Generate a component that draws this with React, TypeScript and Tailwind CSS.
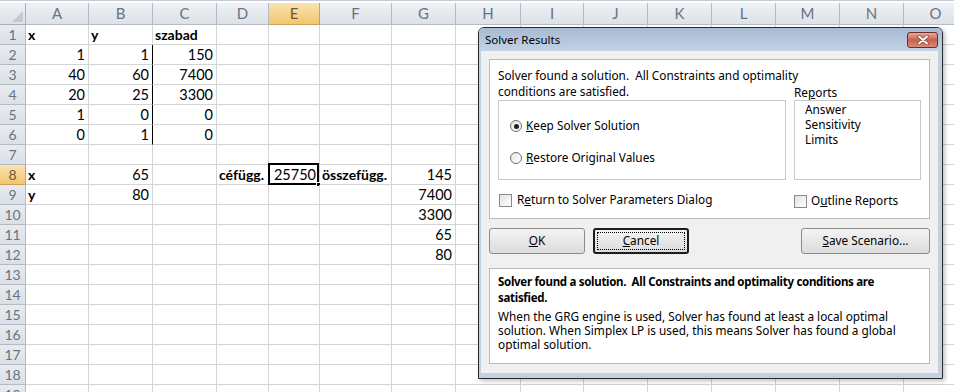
import React from 'react';

const cols = ['A', 'B', 'C', 'D', 'E', 'F', 'G', 'H', 'I', 'J', 'K', 'L', 'M', 'N', 'O'];
const colW = [
  'w-[63px]', 'w-[64px]', 'w-[64px]', 'w-[52px]', 'w-[51px]', 'w-[72px]', 'w-[64px]',
  'w-[65px]', 'w-[63px]', 'w-[64px]', 'w-[64px]', 'w-[64px]', 'w-[64px]', 'w-[64px]', 'w-[64px]',
];

type Cell = { v: string; b?: boolean };

const data: Record<string, Cell> = {
  A1: { v: 'x', b: true }, B1: { v: 'y', b: true }, C1: { v: 'szabad', b: true },
  A2: { v: '1' }, B2: { v: '1' }, C2: { v: '150' },
  A3: { v: '40' }, B3: { v: '60' }, C3: { v: '7400' },
  A4: { v: '20' }, B4: { v: '25' }, C4: { v: '3300' },
  A5: { v: '1' }, B5: { v: '0' }, C5: { v: '0' },
  A6: { v: '0' }, B6: { v: '1' }, C6: { v: '0' },
  A8: { v: 'x', b: true }, B8: { v: '65' }, D8: { v: 'céfügg.', b: true },
  E8: { v: '25750' }, F8: { v: 'összefügg.', b: true }, G8: { v: '145' },
  A9: { v: 'y', b: true }, B9: { v: '80' }, G9: { v: '7400' },
  G10: { v: '3300' }, G11: { v: '65' }, G12: { v: '80' },
};

const rows = Array.from({ length: 19 }, (_, i) => i + 1);

function Sheet() {
  return (
    <div className="flex flex-col font-['Lato',sans-serif] text-[14.5px] text-black">
      <div className="h-[3px] border-t border-[#c4cad2] bg-white" />
      {/* column headers */}
      <div className="flex h-[22px]">
        <div className="relative w-[26px] shrink-0 border-r border-b border-[#a7afb9] bg-gradient-to-b from-[#eef1f5] to-[#dde2e8]">
          <svg className="absolute right-[2px] bottom-[2px]" width="11" height="11" viewBox="0 0 11 11">
            <polygon points="11,0 11,11 0,11" fill="#c3c9d1" />
          </svg>
        </div>
        {cols.map((c, i) => (
          <div
            key={c}
            className={`${colW[i]} shrink-0 flex items-center justify-center border-r border-b text-[15px] ${
              c === 'E'
                ? 'bg-gradient-to-b from-[#fbe3b0] to-[#f3c56c] border-[#c9a35a] text-[#6b5a3a]'
                : 'bg-gradient-to-b from-[#eef1f5] to-[#dde2e8] border-[#b4bbc4] text-[#68737f]'
            }`}
          >
            {c}
          </div>
        ))}
      </div>
      {rows.map((r) => (
        <div key={r} className="flex h-[20px]">
          <div
            className={`w-[26px] shrink-0 flex items-center justify-center border-r border-b text-[14px] ${
              r === 8
                ? 'bg-gradient-to-b from-[#fbe3b0] to-[#f3c56c] border-[#c9a35a] text-[#6b5a3a]'
                : 'bg-gradient-to-b from-[#e8ecf1] to-[#dbe0e6] border-[#b4bbc4] text-[#68737f]'
            }`}
          >
            {r}
          </div>
          {cols.map((c, i) => {
            const cell = data[c + r];
            const thick = c === 'B' && r >= 2 && r <= 6;
            const sel = c === 'E' && r === 8;
            return (
              <div
                key={c}
                className={`${colW[i]} shrink-0 relative flex items-center border-b border-[#d4d4d4] whitespace-nowrap leading-[19px] ${
                  thick ? 'border-r border-r-black' : 'border-r'
                } ${cell?.b ? 'justify-start pl-[2px] font-bold text-[14px]' : 'justify-end pr-[3px]'}`}
              >
                {cell?.v}
                {sel && (
                  <div className="absolute -left-[1px] -top-[2px] -right-[0px] -bottom-[1px] border-2 border-black">
                    <div className="absolute -right-[4px] -bottom-[4px] w-[5px] h-[5px] bg-black border border-white" />
                  </div>
                )}
              </div>
            );
          })}
        </div>
      ))}
    </div>
  );
}

function Radio({ checked }: { checked?: boolean }) {
  return (
    <span className="w-[12px] h-[12px] rounded-full border border-[#6f6f6f] bg-gradient-to-br from-[#e6e6e6] to-white flex items-center justify-center shrink-0">
      {checked && <span className="w-[5px] h-[5px] rounded-full bg-[#1f1f1f]" />}
    </span>
  );
}

function Check() {
  return <span className="w-[13px] h-[13px] border border-[#8a8a8a] bg-gradient-to-br from-[#e2e2e2] to-white shrink-0" />;
}

function Btn({ children, focus, w }: { children: React.ReactNode; focus?: boolean; w: string }) {
  return (
    <div
      className={`${w} h-[26px] relative flex items-center justify-center rounded-[3px] bg-gradient-to-b from-[#f3f3f3] to-[#dcdcdc] ${
        focus ? 'border-2 border-[#1c1c1c]' : 'border border-[#8c8c8c]'
      }`}
    >
      {focus && <div className="absolute inset-[2px] border border-dotted border-black" />}
      <span className="relative">{children}</span>
    </div>
  );
}

function Dialog() {
  return (
    <div className="absolute left-[478px] top-[27px] w-[465px] h-[352px] flex flex-col border border-[#2a2a2a] rounded-t-[6px] font-['Noto_Sans',sans-serif] text-[11.8px] text-black shadow-[2px_2px_4px_rgba(0,0,0,0.25)]">
      <div className="relative h-[23px] shrink-0 rounded-t-[5px] bg-gradient-to-b from-[#a6bad3] to-[#c3d3e4] flex items-center pl-[6px] text-[11.5px]">
        Solver Results
        <div className="absolute right-[4px] top-[4px] w-[31px] h-[16px] rounded-[3px] border border-[#6e2d25] bg-gradient-to-b from-[#e6a99f] via-[#c9604f] to-[#d98a7b] flex items-center justify-center">
          <svg width="12" height="10" viewBox="0 0 12 10">
            <path d="M2 1.5 L10 8.5 M10 1.5 L2 8.5" stroke="#7a3a32" strokeWidth="3.4" strokeLinecap="round" />
            <path d="M2 1.5 L10 8.5 M10 1.5 L2 8.5" stroke="#ffffff" strokeWidth="2" strokeLinecap="round" />
          </svg>
        </div>
      </div>
      <div className="flex-1 flex flex-col border-l-2 border-r-4 border-b-[5px] border-[#c1d1e2] bg-[#f0f0f0] px-[8px] pt-[8px]">
        {/* top panel */}
        <div className="h-[160px] border border-[#b9b9b9] bg-white pl-[8px] pt-[7px] flex flex-col">
          <div className="h-[16px] leading-[16px] whitespace-pre">Solver found a solution.  All Constraints and optimality</div>
          <div className="flex">
            <div className="w-[288px] flex flex-col">
              <div className="h-[16px] leading-[16px]">conditions are satisfied.</div>
              <div className="mt-[1px] h-[80px] border border-[#c8c8c8] flex flex-col pl-[11px]">
                <div className="mt-[18px] h-[14px] flex items-center gap-[4px]">
                  <Radio checked />
                  <span><span className="underline">K</span>eep Solver Solution</span>
                </div>
                <div className="mt-[18px] h-[14px] flex items-center gap-[4px]">
                  <Radio />
                  <span><span className="underline">R</span>estore Original Values</span>
                </div>
              </div>
            </div>
            <div className="ml-[8px] w-[127px] flex flex-col">
              <div className="h-[16px] leading-[16px] mt-[1px]">Re<span className="underline">p</span>orts</div>
              <div className="h-[80px] border border-[#c8c8c8] pl-[10px] pt-[1px] flex flex-col leading-[15px]">
                <div>Answer</div>
                <div>Sensitivity</div>
                <div>Limits</div>
              </div>
            </div>
          </div>
          <div className="flex mt-[12px] h-[16px] items-center">
            <div className="w-[296px] flex items-center gap-[5px] pl-[1px]">
              <Check />
              <span>R<span className="underline">e</span>turn to Solver Parameters Dialog</span>
            </div>
            <div className="flex items-center gap-[4px] mt-[2px]">
              <Check />
              <span>O<span className="underline">u</span>tline Reports</span>
            </div>
          </div>
        </div>
        {/* buttons */}
        <div className="mt-[9px] flex gap-[8px]">
          <Btn w="w-[96px]"><span className="underline">O</span>K</Btn>
          <Btn w="w-[96px]" focus><span className="underline">C</span>ancel</Btn>
          <div className="ml-auto">
            <Btn w="w-[129px]"><span className="underline">S</span>ave Scenario...</Btn>
          </div>
        </div>
        {/* bottom panel */}
        <div className="mt-[14px] h-[96px] border border-[#b9b9b9] bg-white pl-[8px] pt-[5px] flex flex-col">
          <div className="font-bold text-[11.5px] tracking-[-0.3px] leading-[16px] whitespace-pre">
            <div>Solver found a solution.  All Constraints and optimality conditions are</div>
            <div>satisfied.</div>
          </div>
          <div className="mt-[3px] leading-[14px] whitespace-nowrap">
            <div>When the GRG engine is used, Solver has found at least a local optimal</div>
            <div>solution. When Simplex LP is used, this means Solver has found a global</div>
            <div>optimal solution.</div>
          </div>
        </div>
      </div>
    </div>
  );
}

export default function App() {
  return (
    <div className="relative w-[954px] h-[392px] overflow-hidden bg-white">
      <Sheet />
      <Dialog />
    </div>
  );
}
